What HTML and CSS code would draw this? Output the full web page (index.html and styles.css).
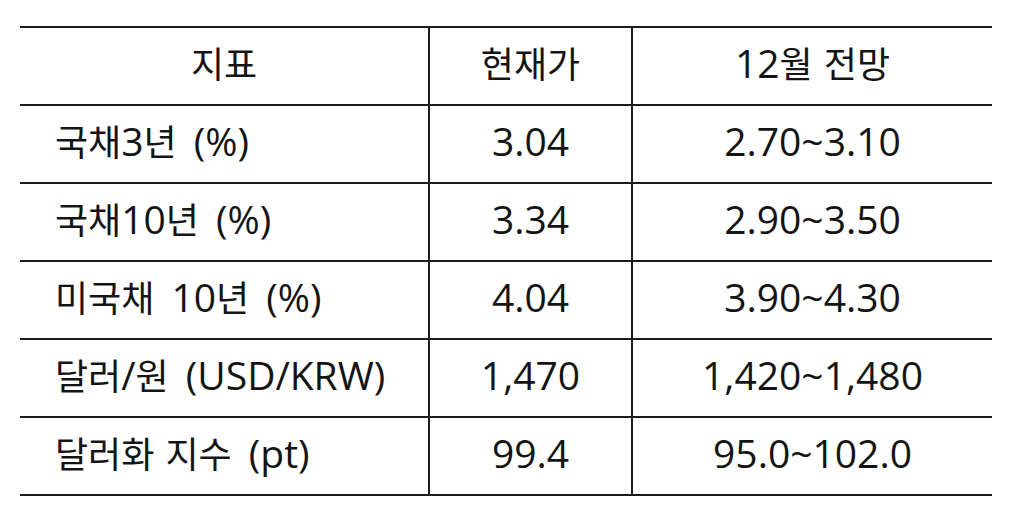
FILE: index.html
```html
<!DOCTYPE html>
<html lang="ko">
<head>
    <meta charset="UTF-8">
    <title>금리 및 환율 전망</title>
    <link rel="stylesheet" href="styles.css">
</head>
<body>
    <table class="outlook">
        <thead>
            <tr>
                <th class="col-name"><span class="ko">지표</span></th>
                <th class="col-now"><span class="ko">현재가</span></th>
                <th class="col-fcst">12<span class="ko">월 전망</span></th>
            </tr>
        </thead>
        <tbody>
            <tr>
                <td class="name"><span class="ko">국채</span>3<span class="ko">년</span> (%)</td>
                <td>3.04</td>
                <td>2.70~3.10</td>
            </tr>
            <tr>
                <td class="name"><span class="ko">국채</span>10<span class="ko">년</span> (%)</td>
                <td>3.34</td>
                <td>2.90~3.50</td>
            </tr>
            <tr>
                <td class="name"><span class="ko">미국채</span> 10<span class="ko">년</span> (%)</td>
                <td>4.04</td>
                <td>3.90~4.30</td>
            </tr>
            <tr>
                <td class="name"><span class="ko">달러</span>/<span class="ko">원</span> (USD/KRW)</td>
                <td>1,470</td>
                <td>1,420~1,480</td>
            </tr>
            <tr>
                <td class="name"><span class="ko">달러화 지수</span> (pt)</td>
                <td>99.4</td>
                <td>95.0~102.0</td>
            </tr>
        </tbody>
    </table>
</body>
</html>
```

FILE: styles.css
```css
:root {
    --line: #1c1c1c;
    --text: #141414;
}

body {
    margin: 0;
    padding: 26px 0 0 20px;
    background: #fff;
    font-family: "Open Sans", "Noto Sans CJK KR", sans-serif;
    color: var(--text);
}

.outlook {
    border-collapse: collapse;
    width: 968px;
    table-layout: fixed;
}

.outlook th,
.outlook td {
    height: 68px;
    padding: 0 0 8px;
    font-size: 39px;
    font-weight: 400;
    line-height: 1;
    word-spacing: 7px;
    text-align: center;
    border-top: 2px solid var(--line);
    border-bottom: 2px solid var(--line);
}

.outlook th + th,
.outlook td + td {
    border-left: 2px solid var(--line);
}

/* hangul runs a touch smaller than the latin digits */
.ko {
    font-family: "Noto Sans CJK KR", sans-serif;
    font-size: 36px;
    word-spacing: 1px;
}

.col-name { width: 408px; }
.col-now { width: 201px; }
.col-fcst { width: 359px; }

.outlook td.name {
    text-align: left;
    padding-left: 35px;
}
```
